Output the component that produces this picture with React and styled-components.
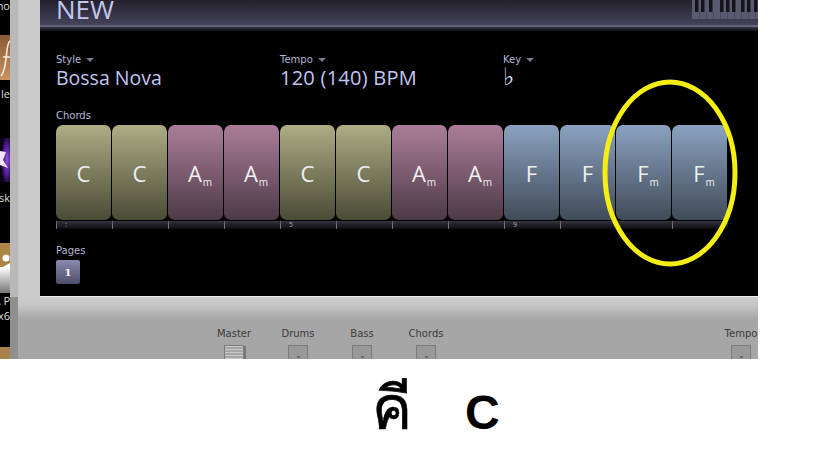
import React from 'react'
import styled, { createGlobalStyle } from 'styled-components'

const GlobalStyle = createGlobalStyle`
  html, body {
    margin: 0;
    padding: 0;
    background: #fff;
  }
`

const Screen = styled.div`
  width: 758px;
  height: 359px;
  display: flex;
  overflow: hidden;
  font-family: "Open Sans", "Liberation Sans", sans-serif;
`

const Dock = styled.div`
  width: 10px;
  flex: none;
  background: #000;
  overflow: hidden;
  display: flex;
  flex-direction: column;
`

const DockLabel = styled.div`
  height: ${p => p.$h}px;
  flex: none;
  color: #ddd;
  font-size: 11px;
  line-height: ${p => p.$h}px;
  white-space: nowrap;
  direction: rtl;
`

const DockIcon = styled.svg`
  display: block;
  flex: none;
  margin-top: ${p => p.$top || 0}px;
`

const Frame = styled.div`
  flex: 1;
  min-width: 0;
  display: flex;
  flex-direction: column;
  background: linear-gradient(#cbcbcb 298px, #c6c6c6 305px, #a6a6a6 319px);
`

const Main = styled.div`
  display: flex;
  height: 297px;
  flex: none;
  border-left: 8px solid #b9b9b9;
`

const Gutter = styled.div`
  width: 22px;
  flex: none;
`

const Panel = styled.div`
  position: relative;
  flex: 1;
  min-width: 0;
  background: #000;
  border-bottom: 1px solid #f0f0f0;
`

const TitleBar = styled.div`
  height: 31px;
  display: flex;
  align-items: flex-start;
  justify-content: space-between;
  padding-left: 16px;
  overflow: hidden;
  background: linear-gradient(#22212c 0, #45435a 25px, #65637a 25px, #65637a 27px, #3b3a4a 27px, #0c0c12 31px);
`

const Title = styled.div`
  color: #c3c6f0;
  font-size: 26px;
  line-height: 26px;
  margin-top: -4px;
`

const Keys = styled.svg`
  display: block;
`

const Params = styled.div`
  display: flex;
  padding: 22px 0 0 16px;
`

const Param = styled.div`
  width: ${p => p.$w}px;
  flex: none;
`

const SmallLabel = styled.div`
  display: flex;
  align-items: center;
  gap: 5px;
  color: #b4b6d6;
  font-family: "DejaVu Sans", sans-serif;
  font-size: 10px;
  line-height: 13px;
`

const Caret = styled.span`
  width: 0;
  height: 0;
  border-left: 4px solid transparent;
  border-right: 4px solid transparent;
  border-top: 4px solid #77778a;
`

const Value = styled.div`
  color: #c3c6f0;
  font-size: ${p => p.$size}px;
  letter-spacing: ${p => p.$track || 0}px;
  line-height: 24px;
  height: 24px;
`

const FlatValue = styled.div`
  color: #d4d6f4;
  font-family: "DejaVu Sans", sans-serif;
  font-size: 24px;
  font-weight: 300;
  line-height: 22px;
  height: 24px;
`

const ChordsBlock = styled.div`
  padding: 19px 0 0 16px;
`

const ChordRow = styled.div`
  display: flex;
  margin-top: 3px;
`

const Chord = styled.div`
  width: 56px;
  height: 96px;
  flex: none;
  box-sizing: border-box;
  display: flex;
  align-items: center;
  justify-content: center;
  color: #f0f0f0;
  font-size: 22px;
  border-radius: 7px;
  border: 1px solid #000;
  border-width: 0 1px 1px 0;
  background: linear-gradient(${p => p.$top}, ${p => p.$bottom});
`

const ChordName = styled.span`
  line-height: 24px;
`

const Minor = styled.span`
  font-size: 10px;
  line-height: 0;
  vertical-align: -4px;
  margin: 0 -9px 0 1px;
`

const Ruler = styled.div`
  display: flex;
  width: 672px;
  height: 8px;
  background: linear-gradient(#35343f, #0c0c10);
`

const Tick = styled.div`
  width: 56px;
  flex: none;
  box-sizing: border-box;
  border-left: 1px solid #6e6e78;
  padding-left: 8px;
  color: #a8a8b8;
  font-size: 7px;
  line-height: 8px;
`

const PagesBlock = styled.div`
  padding: 15px 0 0 16px;
`

const PageButton = styled.div`
  width: 24px;
  height: 24px;
  margin-top: 3px;
  border-radius: 2px;
  display: flex;
  align-items: center;
  justify-content: center;
  color: #fff;
  font-family: "DejaVu Serif", serif;
  font-size: 10px;
  font-weight: bold;
  background: linear-gradient(#8b8aae, #4f4e69);
`

const Marker = styled.svg`
  position: absolute;
  left: 560px;
  top: 77px;
  pointer-events: none;
`

const Mixer = styled.div`
  flex: 1;
  display: flex;
  padding: 31px 0 0 184px;
  border-left: 8px solid #8f8f8f;
`

const Channel = styled.div`
  width: 64px;
  flex: none;
  margin-left: ${p => p.$gap || 0}px;
  display: flex;
  flex-direction: column;
  align-items: center;
  color: #3c3c3c;
  font-family: "DejaVu Sans", sans-serif;
  font-size: 10px;
  line-height: 12px;
`

const ChannelBox = styled.div`
  width: 20px;
  height: 20px;
  margin-top: 5px;
  flex: none;
  box-sizing: border-box;
  border: 1px solid #7c7c7c;
  border-bottom: 0;
  background: ${p => p.$on
    ? 'repeating-linear-gradient(#c8c8c8 0 1px, #a5a5a5 1px 3px)'
    : 'linear-gradient(#666, #666) center 10px / 3px 2px no-repeat, #999'};
  box-shadow: ${p => p.$on ? '2px 1px 0 #777' : 'none'};
`

const Caption = styled.div`
  display: flex;
  align-items: baseline;
  gap: 53px;
  padding: 11px 0 0 372px;
  color: #000;
  font-family: "Liberation Sans", "Noto Sans", sans-serif;
  line-height: 78px;
`

const ThaiWord = styled.span`
  font-size: 60px;
  -webkit-text-stroke: 0.6px #000;
`

const KeyName = styled.span`
  font-size: 48px;
  font-weight: bold;
`

const chords = [
  ['C', false, 'olive'], ['C', false, 'olive'], ['A', true, 'rose'], ['A', true, 'rose'],
  ['C', false, 'olive'], ['C', false, 'olive'], ['A', true, 'rose'], ['A', true, 'rose'],
  ['F', false, 'blue'], ['F', false, 'blue'], ['F', true, 'blue'], ['F', true, 'blue'],
]

const colors = {
  olive: ['#adad85', '#4a4b36'],
  rose: ['#ab7d9a', '#4d3a47'],
  blue: ['#8aa2c0', '#414b58'],
}

const ticks = [':', '', '', '', '5', '', '', '', '9', '', '', '']

const channels = ['Master', 'Drums', 'Bass', 'Chords']

function PianoKeys() {
  const whites = [7, 14, 21, 28, 35, 42, 49, 56, 63]
  const blacks = [3, 9, 17, 28, 34, 40, 49, 55, 62]
  return (
    <Keys width="66" height="19" viewBox="0 0 66 19">
      <rect width="66" height="19" fill="#5b596f" />
      {whites.map(x => <rect key={x} x={x} y="12" width="1" height="7" fill="#4a485c" />)}
      {blacks.map(x => <rect key={x} x={x} width="3.5" height="12" fill="#14141a" />)}
    </Keys>
  )
}

export default function App() {
  return (
    <>
      <GlobalStyle />
      <Screen>
        <Dock>
          <DockLabel $h={12}>no</DockLabel>
          <DockIcon $top={23} width="10" height="45" viewBox="0 0 10 45">
            <defs>
              <linearGradient id="fIcon" x1="0" y1="0" x2="0" y2="1">
                <stop offset="0" stopColor="#8a5a35" />
                <stop offset="1" stopColor="#c9935f" />
              </linearGradient>
            </defs>
            <rect width="10" height="45" fill="url(#fIcon)" />
            <path d="M10 6 C7 8 7 16 6 24 C5 32 4 38 1 41 M3 22 H10" fill="none" stroke="#f6ece2" strokeWidth="1.6" />
          </DockIcon>
          <DockLabel $h={28}>le</DockLabel>
          <DockIcon $top={30} width="10" height="44" viewBox="0 0 10 44">
            <defs>
              <radialGradient id="starGlow" cx="0.7" cy="0.5" r="0.6">
                <stop offset="0" stopColor="#9a4fe0" />
                <stop offset="0.6" stopColor="#4a1c8c" />
                <stop offset="1" stopColor="#0c0318" />
              </radialGradient>
            </defs>
            <rect width="10" height="44" fill="url(#starGlow)" />
            <path d="M0 13 L6 14 L3 22 L8 30 L0 27 Z" fill="#f1e4fb" />
          </DockIcon>
          <DockLabel $h={32}>sk</DockLabel>
          <DockIcon $top={29} width="10" height="50" viewBox="0 0 10 50">
            <defs>
              <linearGradient id="personBase" x1="0" y1="0" x2="0" y2="1">
                <stop offset="0" stopColor="#fff" />
                <stop offset="1" stopColor="#777" />
              </linearGradient>
            </defs>
            <rect width="10" height="50" fill="#ac8547" />
            <circle cx="6" cy="15" r="3.5" fill="#fff" />
            <path d="M0 26 Q6 22 10 20 V24 H0 Z" fill="#fff" />
            <rect y="24" width="10" height="26" fill="url(#personBase)" />
          </DockIcon>
          <DockLabel $h={16}>A P</DockLabel>
          <DockLabel $h={14}>x6</DockLabel>
          <DockIcon $top={24} width="10" height="12" viewBox="0 0 10 12">
            <rect width="10" height="12" fill="#a8824a" />
          </DockIcon>
        </Dock>
        <Frame>
          <Main>
            <Gutter />
            <Panel>
              <TitleBar>
                <Title>NEW</Title>
                <PianoKeys />
              </TitleBar>
              <Params>
                <Param $w={224}>
                  <SmallLabel>Style <Caret /></SmallLabel>
                  <Value $size={19.5}>Bossa Nova</Value>
                </Param>
                <Param $w={223}>
                  <SmallLabel>Tempo <Caret /></SmallLabel>
                  <Value $size={20} $track={0.25}>120 (140) BPM</Value>
                </Param>
                <Param $w={100}>
                  <SmallLabel>Key <Caret /></SmallLabel>
                  <FlatValue>♭</FlatValue>
                </Param>
              </Params>
              <ChordsBlock>
                <SmallLabel>Chords</SmallLabel>
                <ChordRow>
                  {chords.map(([root, minor, tone], i) => (
                    <Chord key={i} $top={colors[tone][0]} $bottom={colors[tone][1]}>
                      <ChordName>{root}{minor && <Minor>m</Minor>}</ChordName>
                    </Chord>
                  ))}
                </ChordRow>
                <Ruler>
                  {ticks.map((t, i) => <Tick key={i}>{t}</Tick>)}
                </Ruler>
              </ChordsBlock>
              <PagesBlock>
                <SmallLabel>Pages</SmallLabel>
                <PageButton>1</PageButton>
              </PagesBlock>
              <Marker width="140" height="192" viewBox="0 0 140 192">
                <ellipse cx="70" cy="96" rx="65" ry="91" fill="none" stroke="#f5ee14" strokeWidth="5" />
              </Marker>
            </Panel>
          </Main>
          <Mixer>
            {channels.map((name, i) => (
              <Channel key={name}>
                {name}
                <ChannelBox $on={i === 0} />
              </Channel>
            ))}
            <Channel $gap={251}>
              Tempo
              <ChannelBox />
            </Channel>
          </Mixer>
        </Frame>
      </Screen>
      <Caption>
        <ThaiWord>คี</ThaiWord>
        <KeyName>C</KeyName>
      </Caption>
    </>
  )
}
